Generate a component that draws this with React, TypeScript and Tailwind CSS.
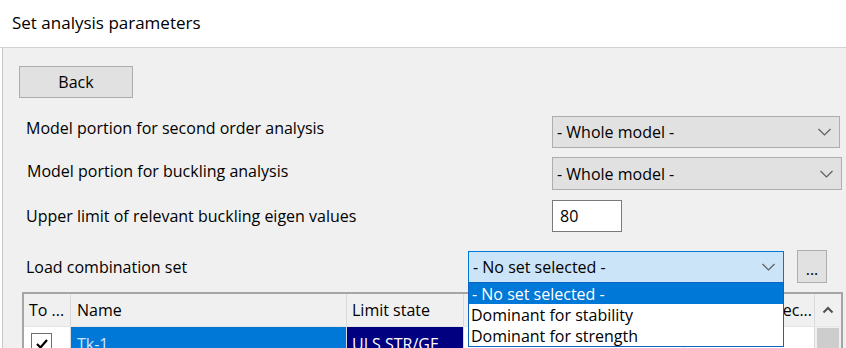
import React from "react";

function Chevron() {
  return (
    <svg width="13" height="8" viewBox="0 0 13 8" className="shrink-0">
      <polyline points="0.5,1 6.5,7 12.5,1" fill="none" stroke="#5f5f5f" strokeWidth="1.2" />
    </svg>
  );
}

function Combo({ w, h, text, active }: { w: string; h: string; text: string; active?: boolean }) {
  return (
    <div
      className={`${w} ${h} shrink-0 flex items-center justify-between pl-[4px] pr-[8px] border ${
        active ? "border-[#0078d7] bg-[#cce4f7]" : "border-[#adadad] bg-[#e1e1e1]"
      }`}
    >
      <span className="text-[16px] text-black leading-none">{text}</span>
      <Chevron />
    </div>
  );
}

export default function App() {
  return (
    <div className="relative w-[846px] h-[348px] overflow-hidden bg-white font-['Open_Sans',sans-serif] text-black">
      <div className="h-[48px] border-b border-[#d2d2d2] flex items-center pl-[12px] pb-[2px]">
        <span className="text-[17px]">Set analysis parameters</span>
      </div>
      <div className="pl-[2px]">
        <div className="h-[320px] bg-[#f0f0f0] border-l border-[#c8c8c8] flex flex-col">
          <div className="shrink-0 mt-[18px] ml-[16px] w-[114px] h-[32px] border border-[#adadad] bg-[#e1e1e1] flex items-center justify-center">
            <span className="text-[16px] leading-none">Back</span>
          </div>

          <div className="shrink-0 mt-[18px] flex items-center h-[32px]">
            <div className="w-[549px] pl-[23px] pb-[9px] text-[16px] leading-none">Model portion for second order analysis</div>
            <Combo w="w-[288px]" h="h-[32px]" text="- Whole model -" />
          </div>

          <div className="shrink-0 mt-[9px] flex items-center h-[33px]">
            <div className="w-[549px] pl-[24px] pb-[6px] text-[16px] leading-none">Model portion for buckling analysis</div>
            <Combo w="w-[290px]" h="h-[33px]" text="- Whole model -" />
          </div>

          <div className="shrink-0 mt-[10px] flex items-center h-[32px]">
            <div className="w-[549px] pl-[23px] text-[16px] leading-none">Upper limit of relevant buckling eigen values</div>
            <div className="w-[70px] h-[32px] bg-white border border-[#7a7a7a] flex items-center pl-[7px]">
              <span className="text-[16px] leading-none">80</span>
            </div>
          </div>

          <div className="shrink-0 mt-[18px] flex items-center h-[33px]">
            <div className="w-[465px] pl-[23px] text-[16px] leading-none">Load combination set</div>
            <Combo w="w-[316px]" h="h-[32px]" text="- No set selected -" active />
            <div className="ml-[13px] w-[30px] h-[33px] border border-[#adadad] bg-[#e1e1e1] flex items-center justify-center">
              <span className="text-[16px] leading-none pt-[4px]">...</span>
            </div>
          </div>

          <div className="shrink-0 mt-[9px] ml-[19px] w-[821px] border-2 border-b-0 border-[#a5a5a5] flex flex-col">
            <div className="flex h-[33px] bg-[#f0f0f0] border-b border-[#e4e4e4]">
              <div className="w-[47px] border-r border-[#dadada] flex items-center pl-[5px] text-[16px]">To ...</div>
              <div className="w-[276px] border-r border-[#dadada] flex items-center pl-[6px] text-[16px]">Name</div>
              <div className="w-[117px] border-r border-[#dadada] flex items-center pl-[5px] text-[16px]">Limit state</div>
              <div className="w-[220px] border-r border-[#dadada]" />
              <div className="w-[131px] border-r border-[#dadada] flex items-center justify-end pr-[2px] text-[16px] overflow-hidden">
                <span className="whitespace-nowrap">ec...</span>
              </div>
              <div className="flex-1 flex items-center justify-center">
                <svg width="12" height="8" viewBox="0 0 12 8">
                  <polyline points="1.5,6.5 6,2 10.5,6.5" fill="none" stroke="#505050" strokeWidth="2" />
                </svg>
              </div>
            </div>
            <div className="flex h-[33px]">
              <div className="w-[47px] bg-white border-r border-[#dadada] flex items-center pl-[7px]">
                <div className="w-[21px] h-[21px] border border-[#6e6e6e] bg-white flex items-center justify-center">
                  <svg width="14" height="12" viewBox="0 0 14 12">
                    <polyline points="2,6 5.5,9.5 12,2" fill="none" stroke="#000" strokeWidth="2.2" />
                  </svg>
                </div>
              </div>
              <div className="w-[276px] bg-[#0078d7] border-r border-[#dadada] flex items-center pl-[6px] text-[16px] text-[#cfe6fa]">Tk-1</div>
              <div className="w-[117px] bg-[#000080] border-r border-[#dadada] flex items-center pl-[5px] text-[16px] text-white whitespace-nowrap overflow-hidden">ULS STR/GE</div>
              <div className="w-[220px] bg-white border-r border-[#dadada]" />
              <div className="w-[131px] bg-white border-r border-[#dadada]" />
              <div className="flex-1 bg-[#f0f0f0] flex justify-center pt-[1px]">
                <div className="w-[22px] h-full bg-[#cdcdcd]" />
              </div>
            </div>
          </div>
        </div>
      </div>

      <div className="absolute left-[468px] top-[282px] w-[316px] h-[65px] bg-white border border-[#0a64c0] flex flex-col text-[16px]">
        <div className="h-[21px] bg-[#0078d7] text-white flex items-center pl-[3px] leading-none">- No set selected -</div>
        <div className="h-[21px] flex items-center pl-[2px] leading-none">Dominant for stability</div>
        <div className="h-[21px] flex items-center pl-[2px] leading-none">Dominant for strength</div>
      </div>
    </div>
  );
}
